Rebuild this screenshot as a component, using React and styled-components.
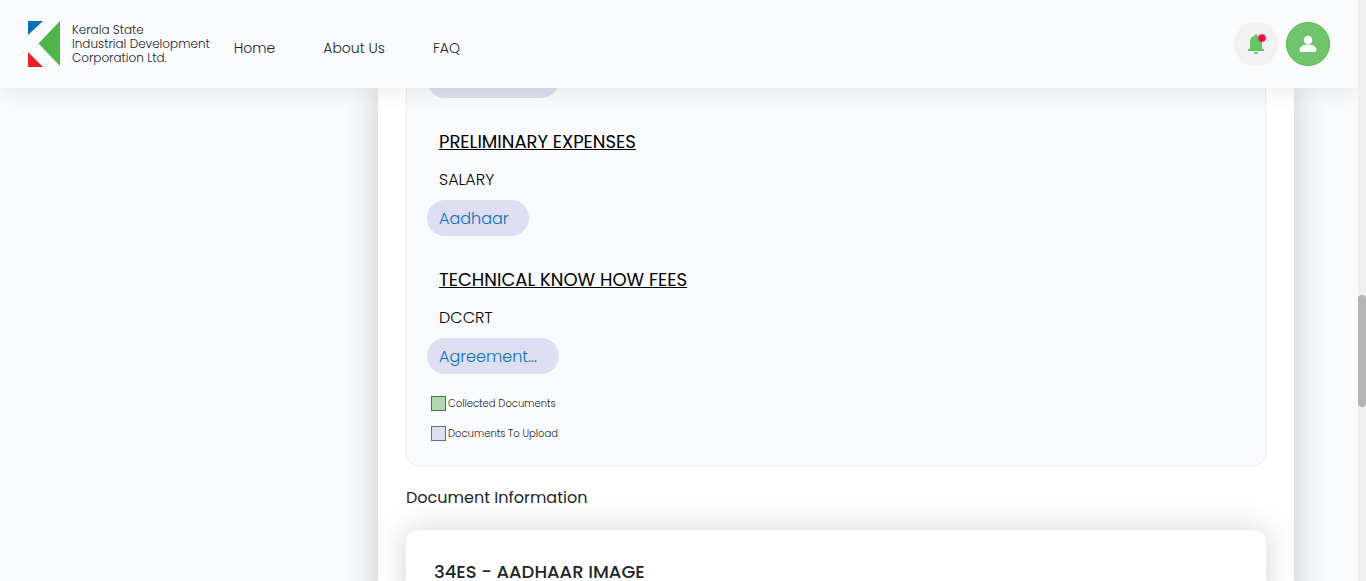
import React from "react";
import styled, { createGlobalStyle } from "styled-components";

const GlobalStyle = createGlobalStyle`
  * { box-sizing: border-box; }
  body {
    margin: 0;
    background: #f9fafc;
    color: #212529;
    font-family: Poppins, Inter, "Open Sans", sans-serif;
    font-size: 16px;
    line-height: 24px;
  }
  h2, h3, p, ul { margin: 0; padding: 0; }
  button { font-family: inherit; cursor: pointer; }
`;

const Window = styled.div`
  display: flex;
  height: 100vh;
  overflow: hidden;
`;

const Page = styled.div`
  flex: 1;
  min-width: 0;
  display: flex;
  flex-direction: column;
  overflow: hidden;
`;

const Header = styled.header`
  position: relative;
  z-index: 1;
  flex: none;
  display: flex;
  align-items: center;
  padding: 21px 28px;
  background: #f9fafc;
  box-shadow: 0 8px 16px rgba(0, 0, 0, 0.06);
`;

const Brand = styled.a`
  display: flex;
  align-items: center;
  gap: 12px;
  color: #212529;
  font-size: 12px;
  font-weight: 300;
  line-height: 14px;
  text-decoration: none;
`;

const Nav = styled.nav`
  display: flex;
  flex: 1;
  gap: 48px;
  padding: 8px 0 0 24px;
`;

const NavLink = styled.a`
  color: #212529;
  font-size: 14px;
  font-weight: 300;
  text-decoration: none;
`;

const Actions = styled.div`
  display: flex;
  gap: 8px;
`;

const RoundButton = styled.button`
  display: grid;
  place-items: center;
  width: 44px;
  height: 44px;
  padding: 0;
  border: 1px solid ${(p) => (p.$filled ? "#4fb64b" : "#f2f2f2")};
  border-radius: 50%;
  background: ${(p) => (p.$filled ? "#70c46b" : "#f2f2f2")};
`;

const Body = styled.div`
  flex: 1;
  min-height: 0;
  display: grid;
  grid-template-columns: 378px minmax(0, 1fr);
  padding-right: 64px;
`;

const Sheet = styled.main`
  grid-column: 2;
  padding: 0 28px;
  background: #fff;
  box-shadow: 0 0 32px rgba(0, 0, 0, 0.2);
`;

const Panel = styled.section`
  margin-top: -27px;
  padding: 0 20px 24px;
  border: 1px solid #eee;
  border-radius: 12px;
  background: #f9fafc;
`;

const Group = styled.div`
  margin-top: 30px;
`;

const GroupTitle = styled.h3`
  margin: 0 0 12px 12px;
  color: #000;
  font-size: 18px;
  font-weight: 400;
  line-height: 28px;
  text-decoration: underline;
  text-decoration-thickness: 1px;
`;

const ItemName = styled.p`
  margin: 0 0 8px 12px;
  color: #000;
  font-weight: 300;
`;

const Chip = styled.button`
  display: block;
  min-width: ${(p) => (p.$wide ? "132px" : "102px")};
  height: 36px;
  padding: 0 20px 0 12px;
  border: 0;
  border-radius: 18px;
  background: #dfddf1;
  color: #0571b9;
  font-size: 16px;
  font-weight: 300;
  text-align: left;
`;

const Legend = styled.ul`
  display: grid;
  gap: 15px;
  margin: 22px 0 0 4px;
  list-style: none;
`;

const LegendItem = styled.li`
  display: flex;
  align-items: center;
  gap: 2px;
  font-size: 10px;
  font-weight: 300;
  line-height: 15px;
`;

const Swatch = styled.span`
  width: 15px;
  height: 15px;
  border: 1px solid ${(p) => (p.$collected ? "#526f53" : "#6c6b78")};
  background: ${(p) => (p.$collected ? "#abdaab" : "#dfddf1")};
`;

const SectionTitle = styled.h2`
  margin: 20px 0;
  font-size: 16px;
  font-weight: 400;
`;

const DocumentCard = styled.section`
  padding: 28px;
  border-radius: 12px;
  background: #fff;
  box-shadow: 0 0 32px rgba(0, 0, 0, 0.18);
`;

const DocumentTitle = styled.h3`
  font-size: 18px;
  font-weight: 500;
  line-height: 28px;
`;

const ScrollTrack = styled.div`
  flex: none;
  width: 8px;
  padding-top: 295px;
  background: #efefef;
`;

const ScrollThumb = styled.div`
  height: 112px;
  border-radius: 4px;
  background: #b4b4b4;
`;

const Logo = () => (
  <svg width="32" height="46" viewBox="0 0 32 46" aria-hidden="true">
    <path d="M0 0H15L0 14Z" fill="#0571b9" />
    <path d="M0 31L15 46H0Z" fill="#ec1f27" />
    <path d="M32 0V45L10.500 22.500Z" fill="#4eb648" />
  </svg>
);

const BellIcon = () => (
  <svg width="24" height="24" viewBox="0 0 24 24" aria-hidden="true">
    <path d="M10.500 3.700C10.500 1.600 13.500 1.600 13.500 3.700C16.300 4.400 18 6.500 18 9.500V17H20V19H4V17H6V9.500C6 6.500 7.700 4.400 10.500 3.700ZM10 20H14A2 2 0 0 1 10 20Z" fill="#6bc267" />
    <circle cx="18" cy="6" r="4.500" fill="#e8103c" fillOpacity=".35" />
    <circle cx="18" cy="6" r="3.500" fill="#e70f3b" />
  </svg>
);

const PersonIcon = () => (
  <svg width="24" height="24" viewBox="0 0 24 24" aria-hidden="true">
    <circle cx="12" cy="8" r="4.300" fill="#fff" />
    <path d="M3.500 18C3.500 10.700 20.500 10.700 20.500 18Q20.500 20 18.500 20H5.500Q3.500 20 3.500 18Z" fill="#fff" />
  </svg>
);

const groups = [
  { title: "PRELIMINARY EXPENSES", item: "SALARY", doc: "Aadhaar" },
  { title: "TECHNICAL KNOW HOW FEES", item: "DCCRT", doc: "Agreement...", wide: true },
];

export default function App() {
  return (
    <>
      <GlobalStyle />
      <Window>
        <Page>
          <Header>
            <Brand href="#">
              <Logo />
              <span>
                Kerala State
                <br />
                Industrial Development
                <br />
                Corporation Ltd.
              </span>
            </Brand>
            <Nav>
              <NavLink href="#home">Home</NavLink>
              <NavLink href="#about">About Us</NavLink>
              <NavLink href="#faq">FAQ</NavLink>
            </Nav>
            <Actions>
              <RoundButton type="button" aria-label="Notifications">
                <BellIcon />
              </RoundButton>
              <RoundButton type="button" aria-label="Profile" $filled>
                <PersonIcon />
              </RoundButton>
            </Actions>
          </Header>
          <Body>
            <Sheet>
              <Panel>
                <Chip type="button" $wide />
                {groups.map((g) => (
                  <Group key={g.title}>
                    <GroupTitle>{g.title}</GroupTitle>
                    <ItemName>{g.item}</ItemName>
                    <Chip type="button" $wide={g.wide}>
                      {g.doc}
                    </Chip>
                  </Group>
                ))}
                <Legend>
                  <LegendItem>
                    <Swatch $collected />
                    Collected Documents
                  </LegendItem>
                  <LegendItem>
                    <Swatch />
                    Documents To Upload
                  </LegendItem>
                </Legend>
              </Panel>
              <SectionTitle>Document Information</SectionTitle>
              <DocumentCard>
                <DocumentTitle>34ES - AADHAAR IMAGE</DocumentTitle>
              </DocumentCard>
            </Sheet>
          </Body>
        </Page>
        <ScrollTrack>
          <ScrollThumb />
        </ScrollTrack>
      </Window>
    </>
  );
}
